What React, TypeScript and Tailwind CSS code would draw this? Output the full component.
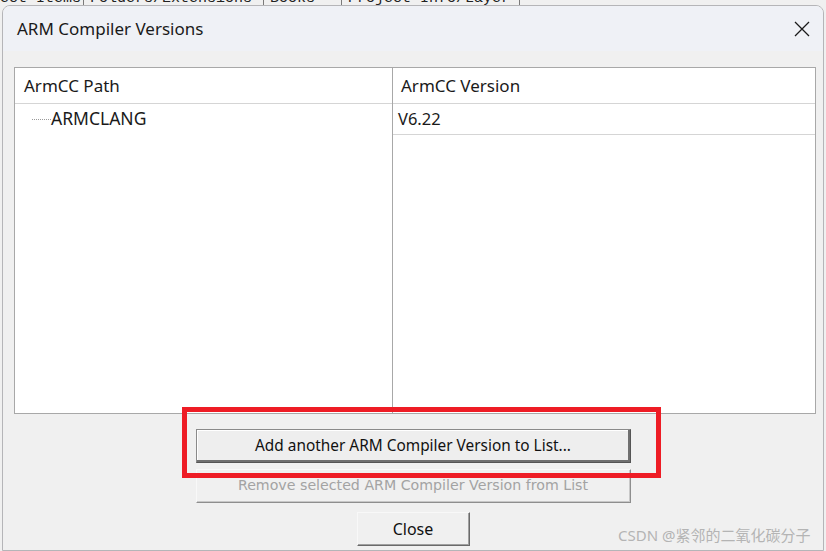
import React from "react";

const ui = { fontFamily: '"Noto Sans", "Open Sans", Arial, sans-serif' };
const tah = { fontFamily: '"DejaVu Sans", "Liberation Sans", Arial, sans-serif' };

export default function App() {
  return (
    <div className="relative w-[826px] h-[551px] overflow-hidden bg-[#f0f0f0] flex flex-col" style={ui}>
      {/* background tab strip */}
      <div className="h-[6px] overflow-hidden flex items-end bg-[#f0f0f0] shrink-0">
        <div className="flex items-end h-[6px] text-[15px] leading-[15px] text-[#222]" style={{ fontFamily: '"Liberation Mono", monospace' }}>
          <div className="w-[84px] border-r border-[#7a7a7a] h-[6px] overflow-hidden"><div className="-mt-[9px]">ect Items</div></div>
          <div className="w-[180px] pl-[6px] border-r border-[#7a7a7a] h-[6px] overflow-hidden"><div className="-mt-[9px]">Folders/Extensions</div></div>
          <div className="w-[78px] pl-[6px] border-r border-[#7a7a7a] h-[6px] overflow-hidden"><div className="-mt-[9px]">Books</div></div>
          <div className="w-[178px] pl-[6px] border-r border-[#7a7a7a] h-[6px] overflow-hidden"><div className="-mt-[9px]">Project Info/Layer</div></div>
        </div>
      </div>

      {/* dialog */}
      <div className="flex-1 ml-[2px] mr-[2px] -mt-[1px] flex flex-col rounded-t-[8px] border border-[#b5b5b8] overflow-hidden">
        <div className="h-[45px] bg-[#eff1f6] flex items-center justify-between pl-[14px] pr-[10px] shrink-0">
          <span className="text-[17px] text-[#1a1a1a]" style={ui}>ARM Compiler Versions</span>
          <svg width="16" height="16" viewBox="0 0 16 16" className="mr-[3px]">
            <path d="M1 1 L15 15 M15 1 L1 15" stroke="#1a1a1a" strokeWidth="1.3" />
          </svg>
        </div>
        <div className="flex-1 bg-[#f0f0f0] flex flex-col items-center pt-[16px] pl-[11px] pr-[7px] pb-[2px]">
          {/* list */}
          <div className="w-full h-[347px] border border-[#a8a8a8] bg-white flex">
            <div className="w-[378px] border-r border-[#a8a8a8] flex flex-col">
              <div className="h-[36px] border-b border-[#d5d5d5] flex items-center pl-[9px] text-[17px] text-[#1a1a1a]">ArmCC Path</div>
              <div className="h-[29px] flex items-center pl-[17px] text-[17.5px] text-[#1a1a1a]">
                <span className="w-[19px] border-t border-dotted border-[#9a9a9a] mt-[1px]"></span>
                <span>ARMCLANG</span>
              </div>
            </div>
            <div className="flex-1 flex flex-col">
              <div className="h-[36px] border-b border-[#d5d5d5] flex items-center pl-[8px] text-[17px] text-[#1a1a1a]">ArmCC Version</div>
              <div className="h-[31px] border-b border-[#d5d5d5] flex items-center pl-[5px] text-[16.5px] text-[#1a1a1a]">V6.22</div>
            </div>
          </div>

          {/* buttons */}
          <button
            className="mt-[15px] mr-[4px] w-[435px] h-[34px] bg-[#eeeeee] text-[15.4px] text-[#111] border border-[#8a8a8a] border-r-[#555] border-b-[#555] shadow-[inset_-2px_-2px_0_#707070,inset_1px_1px_0_#ffffff] flex items-center justify-center"
            style={ui}
          >
            Add another ARM Compiler Version to List...
          </button>
          <button
            className="mt-[6px] mr-[4px] w-[435px] h-[34px] bg-[#f0f0f0] text-[14.2px] text-[#a3a3a3] border border-[#f8f8f8] border-r-[#8e8e8e] border-b-[#8e8e8e] shadow-[inset_-1px_-1px_0_#c8c8c8] flex items-center justify-center"
            style={tah}
          >
            Remove selected ARM Compiler Version from List
          </button>
          <button
            className="mt-[9px] mr-[4px] w-[113px] h-[34px] bg-[#f0f0f0] text-[16px] text-[#111] border border-[#f8f8f8] border-r-[#6a6a6a] border-b-[#6a6a6a] shadow-[inset_-1px_-1px_0_#a0a0a0] flex items-center justify-center"
            style={ui}
          >
            Close
          </button>
        </div>
      </div>

      {/* red annotation */}
      <div className="absolute left-[182px] top-[407px] w-[479px] h-[71px] border-[5px] border-[#ee1c25] pointer-events-none"></div>

      {/* watermark */}
      <div className="absolute left-[618px] top-[524px] text-[15px] text-[#b4b4b4]" style={{ fontFamily: '"Noto Sans", "Noto Sans CJK SC", sans-serif' }}>
        CSDN @紧邻的二氧化碳分子
      </div>
    </div>
  );
}
